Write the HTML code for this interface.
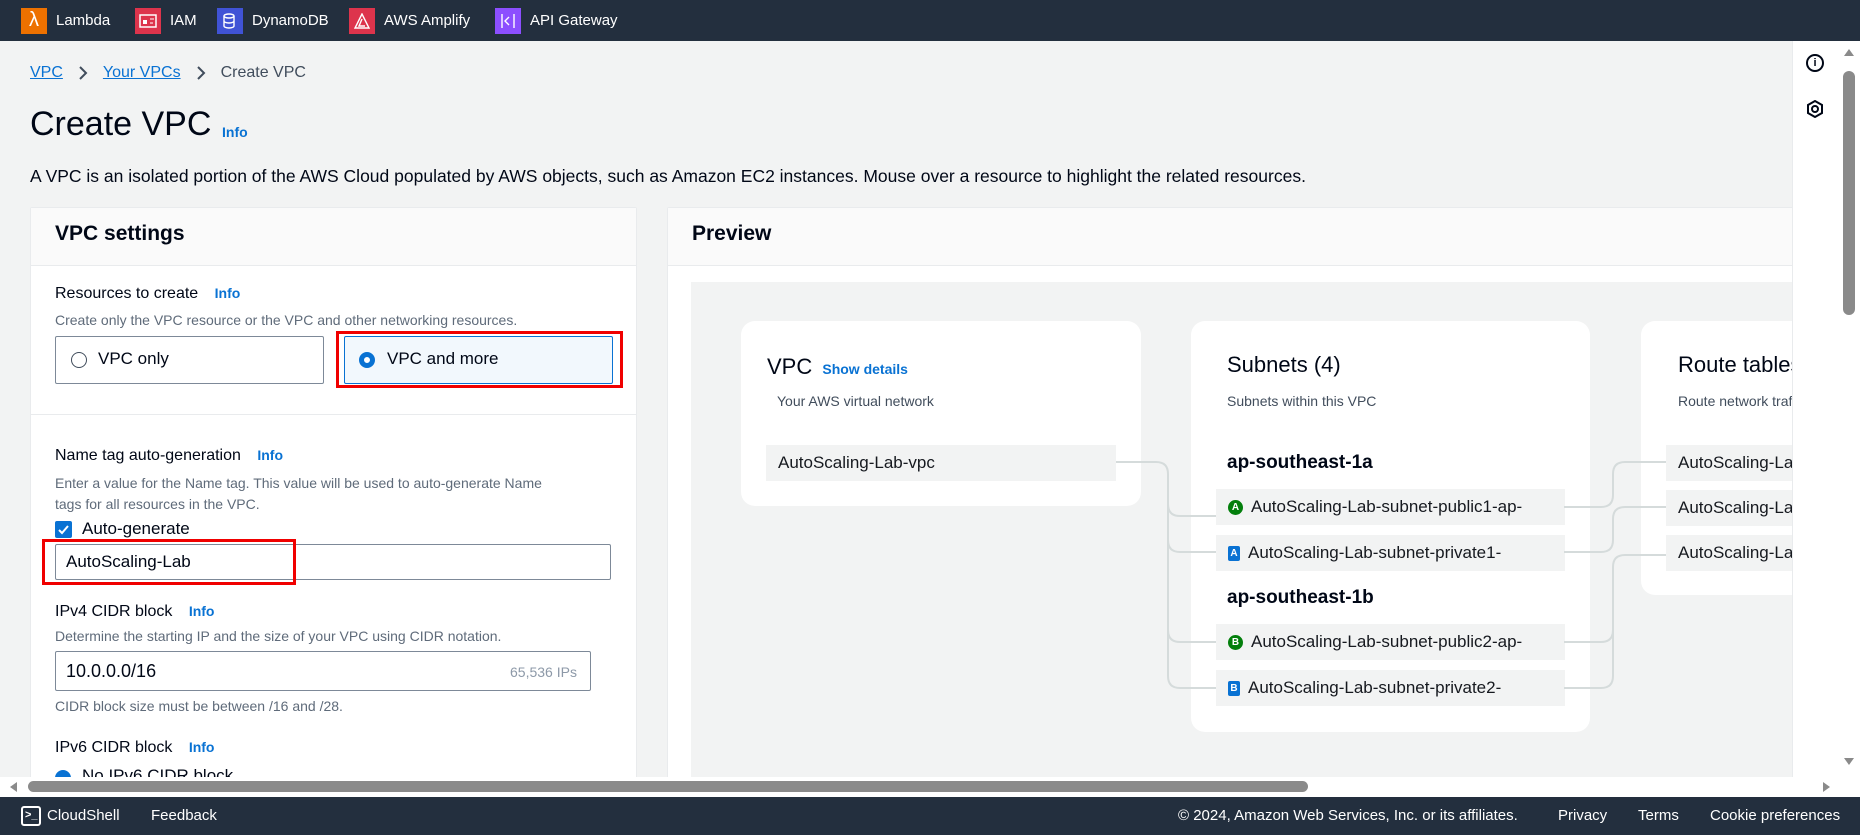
<!DOCTYPE html>
<html><head><meta charset="utf-8">
<style>
*{box-sizing:border-box;margin:0;padding:0}
body{width:1860px;height:835px;overflow:hidden;background:#f2f3f3;font-family:"Liberation Sans",sans-serif;color:#000716;position:relative}
.a{position:absolute;white-space:nowrap}
.top{left:0;top:0;width:1860px;height:41px;background:#232f3e}
.svc{top:0;height:41px;display:flex;align-items:center;color:#fff;font-size:15px}
.ic{width:26px;height:26px;margin-right:9px;display:flex;align-items:center;justify-content:center}
.lnk{color:#0972d3;text-decoration:underline}
.info{color:#0972d3;font-weight:bold;font-size:14px}
.panel{background:#fff;border:1px solid #e9ebed;border-radius:2px}
.lab{font-size:16px;color:#000716}
.desc{font-size:14px;color:#5f6b7a}
.card{background:#fff;border-radius:14px}
.item{background:#f2f3f3;font-size:17px;color:#16191f;display:flex;align-items:center;padding-left:12px}
.badge{width:15px;height:15px;margin-right:8px;color:#fff;font-size:10px;font-weight:bold;display:flex;align-items:center;justify-content:center}
.foot{left:0;top:797px;width:1860px;height:38px;background:#232f3e;color:#fff;font-size:15px}
</style></head><body>
<div class="a top"></div>
<div class="a svc" style="left:21px"><div class="ic" style="background:#ed7100;color:#fff;font-size:20px">λ</div>Lambda</div>
<div class="a svc" style="left:135px"><div class="ic" style="background:#dd344c"><svg width="18" height="14" viewBox="0 0 18 14"><rect x="1" y="1" width="16" height="12" fill="none" stroke="#fff" stroke-width="1.5"/><rect x="4" y="6" width="4" height="4" fill="#fff"/><path d="M11 5h4M11 9h3" stroke="#fff"/></svg></div>IAM</div>
<div class="a svc" style="left:217px"><div class="ic" style="background:#4053d6"><svg width="16" height="18" viewBox="0 0 16 18"><ellipse cx="7" cy="4" rx="5" ry="2" fill="none" stroke="#fff" stroke-width="1.4"/><path d="M2 4v10c0 1.1 2.2 2 5 2s5-.9 5-2V4M2 9c0 1.1 2.2 2 5 2s5-.9 5-2" fill="none" stroke="#fff" stroke-width="1.4"/></svg></div>DynamoDB</div>
<div class="a svc" style="left:349px"><div class="ic" style="background:#dd344c"><svg width="18" height="16" viewBox="0 0 18 16"><path d="M9 1L2 15h14zM9 6l-3 7h6" fill="none" stroke="#fff" stroke-width="1.4"/></svg></div>AWS Amplify</div>
<div class="a svc" style="left:495px"><div class="ic" style="background:#8c4fff"><svg width="18" height="18" viewBox="0 0 18 18"><path d="M3 2v14M15 2v14M10 5l-4 4 4 4" fill="none" stroke="#fff" stroke-width="1.4"/></svg></div>API Gateway</div>

<div class="a" style="left:30px;top:64px;font-size:16px;display:flex;align-items:center"><span class="lnk">VPC</span><svg width="40" height="18" viewBox="0 0 40 18"><path d="M17 3l6 6-6 6" fill="none" stroke="#414d5c" stroke-width="2"/></svg><span class="lnk">Your VPCs</span><svg width="40" height="18" viewBox="0 0 40 18"><path d="M17 3l6 6-6 6" fill="none" stroke="#414d5c" stroke-width="2"/></svg><span style="color:#414d5c">Create VPC</span></div>
<div class="a" style="left:30px;top:105px;font-size:34px;color:#000716">Create VPC</div>
<div class="a info" style="left:222px;top:124px">Info</div>
<div class="a" style="left:30px;top:166px;font-size:17.5px">A VPC is an isolated portion of the AWS Cloud populated by AWS objects, such as Amazon EC2 instances. Mouse over a resource to highlight the related resources.</div>

<!-- left panel -->
<div class="a panel" style="left:30px;top:207px;width:607px;height:600px"></div>
<div class="a" style="left:31px;top:208px;width:605px;height:58px;background:#fafafa;border-bottom:1px solid #e9ebed"></div>
<div class="a" style="left:55px;top:222px;font-size:21px;font-weight:bold">VPC settings</div>
<div class="a lab" style="left:55px;top:285px">Resources to create <span class="info" style="margin-left:12px">Info</span></div>
<div class="a desc" style="left:55px;top:312px">Create only the VPC resource or the VPC and other networking resources.</div>
<div class="a" style="left:55px;top:336px;width:269px;height:48px;border:1px solid #7d8998;border-radius:2px"></div>
<div class="a" style="left:71px;top:352px;width:16px;height:16px;border:1.5px solid #414d5c;border-radius:50%"></div>
<div class="a" style="left:98px;top:349px;font-size:17px">VPC only</div>
<div class="a" style="left:344px;top:336px;width:269px;height:48px;border:1px solid #0972d3;background:#f2f8fd;border-radius:2px"></div>
<div class="a" style="left:359px;top:352px;width:16px;height:16px;border:5px solid #0972d3;border-radius:50%;background:#fff"></div>
<div class="a" style="left:387px;top:349px;font-size:17px">VPC and more</div>
<div class="a" style="left:336px;top:331px;width:287px;height:57px;border:3px solid #f00000"></div>
<div class="a" style="left:31px;top:414px;width:605px;height:1px;background:#e9ebed"></div>
<div class="a lab" style="left:55px;top:447px">Name tag auto-generation <span class="info" style="margin-left:12px">Info</span></div>
<div class="a desc" style="left:55px;top:473px;line-height:21px">Enter a value for the Name tag. This value will be used to auto-generate Name<br>tags for all resources in the VPC.</div>
<div class="a" style="left:55px;top:521px;width:17px;height:17px;background:#0972d3;border-radius:2px"><svg width="17" height="17"><path d="M4 9l3 3 6-7" fill="none" stroke="#fff" stroke-width="2"/></svg></div>
<div class="a lab" style="left:82px;top:519px;font-size:17px">Auto-generate</div>
<div class="a" style="left:55px;top:544px;width:556px;height:36px;border:1px solid #7d8998;border-radius:2px;background:#fff"></div>
<div class="a" style="left:66px;top:552px;font-size:17px">AutoScaling-Lab</div>
<div class="a" style="left:42px;top:539px;width:254px;height:46px;border:3px solid #f00000"></div>
<div class="a lab" style="left:55px;top:603px">IPv4 CIDR block <span class="info" style="margin-left:12px">Info</span></div>
<div class="a desc" style="left:55px;top:628px">Determine the starting IP and the size of your VPC using CIDR notation.</div>
<div class="a" style="left:55px;top:651px;width:536px;height:40px;border:1px solid #7d8998;border-radius:2px;background:#fff"></div>
<div class="a" style="left:66px;top:661px;font-size:18px">10.0.0.0/16</div>
<div class="a desc" style="left:510px;top:664px;color:#8d99a8">65,536 IPs</div>
<div class="a desc" style="left:55px;top:698px">CIDR block size must be between /16 and /28.</div>
<div class="a lab" style="left:55px;top:739px">IPv6 CIDR block <span class="info" style="margin-left:12px">Info</span></div>
<div class="a" style="left:55px;top:770px;width:16px;height:16px;border-radius:50%;background:#0972d3"></div>
<div class="a" style="left:82px;top:766px;font-size:17px">No IPv6 CIDR block</div>

<!-- right panel -->
<div class="a panel" style="left:667px;top:207px;width:1130px;height:600px"></div>
<div class="a" style="left:668px;top:208px;width:1125px;height:58px;background:#fafafa;border-bottom:1px solid #e9ebed"></div>
<div class="a" style="left:692px;top:222px;font-size:21px;font-weight:bold">Preview</div>
<div class="a" style="left:691px;top:282px;width:1110px;height:520px;background:#f2f3f3"></div>

<div class="a card" style="left:741px;top:321px;width:400px;height:185px"></div>
<div class="a" style="left:767px;top:354px;font-size:22px">VPC <span style="color:#0972d3;font-weight:bold;font-size:14px;margin-left:4px">Show details</span></div>
<div class="a" style="left:777px;top:393px;font-size:14px;color:#414d5c">Your AWS virtual network</div>
<div class="a item" style="left:766px;top:445px;width:350px;height:36px">AutoScaling-Lab-vpc</div>

<div class="a card" style="left:1191px;top:321px;width:399px;height:411px"></div>
<div class="a" style="left:1227px;top:352px;font-size:22px">Subnets (4)</div>
<div class="a" style="left:1227px;top:393px;font-size:14px;color:#414d5c">Subnets within this VPC</div>
<div class="a" style="left:1227px;top:452px;font-size:19px;font-weight:bold">ap-southeast-1a</div>
<div class="a item" style="left:1216px;top:489px;width:349px;height:36px"><div class="badge" style="background:#037f0c;border-radius:50%">A</div>AutoScaling-Lab-subnet-public1-ap-</div>
<div class="a item" style="left:1216px;top:535px;width:349px;height:36px"><div class="badge" style="background:#0972d3;border-radius:2px;width:12px">A</div>AutoScaling-Lab-subnet-private1-</div>
<div class="a" style="left:1227px;top:587px;font-size:19px;font-weight:bold">ap-southeast-1b</div>
<div class="a item" style="left:1216px;top:624px;width:349px;height:36px"><div class="badge" style="background:#037f0c;border-radius:50%">B</div>AutoScaling-Lab-subnet-public2-ap-</div>
<div class="a item" style="left:1216px;top:670px;width:349px;height:36px"><div class="badge" style="background:#0972d3;border-radius:2px;width:12px">B</div>AutoScaling-Lab-subnet-private2-</div>

<div class="a card" style="left:1641px;top:321px;width:300px;height:274px"></div>
<div class="a" style="left:1678px;top:352px;font-size:22px">Route tables</div>
<div class="a" style="left:1678px;top:393px;font-size:14px;color:#414d5c">Route network traffic</div>
<div class="a item" style="left:1666px;top:445px;width:300px;height:36px">AutoScaling-Lab-rtb</div>
<div class="a item" style="left:1666px;top:490px;width:300px;height:36px">AutoScaling-Lab-rtb</div>
<div class="a item" style="left:1666px;top:535px;width:300px;height:36px">AutoScaling-Lab-rtb</div>

<svg class="a" style="left:0;top:0" width="1860" height="835">
<g fill="none" stroke="#d5dbdb" stroke-width="2">
<path d="M1116 462h40q12 0 12 12v4M1168 474v30q0 12 12 12h36M1168 474v66q0 12 12 12h36M1168 474v156q0 12 12 12h36M1168 474v202q0 12 12 12h36"/>
<path d="M1564 507h37q12 0 12-12v-21q0-12 12-12h41"/>
<path d="M1564 552h37q12 0 12-12v-21q0-12 12-12h41"/>
<path d="M1564 642h37q12 0 12-12v-63q0-12 12-12h41"/>
<path d="M1564 688h37q12 0 12-12v-109"/>
</g></svg>

<!-- right sidebar -->
<div class="a" style="left:1792px;top:41px;width:46px;height:736px;background:#fff;border-left:1px solid #e9ebed"></div>
<div class="a" style="left:1806px;top:54px;width:18px;height:18px;border:2px solid #000716;border-radius:50%;font-size:11px;font-weight:bold;text-align:center;line-height:14px">i</div>
<svg class="a" style="left:1806px;top:100px" width="18" height="18" viewBox="0 0 18 18"><path d="M9 1l7 4v8l-7 4-7-4V5z" fill="none" stroke="#000716" stroke-width="2"/><circle cx="9" cy="9" r="3" fill="none" stroke="#000716" stroke-width="2"/></svg>
<!-- vertical scrollbar -->
<div class="a" style="left:1838px;top:41px;width:22px;height:756px;background:#fff"></div>
<div class="a" style="left:1843px;top:71px;width:12px;height:244px;background:#8a8a8a;border-radius:6px"></div>
<svg class="a" style="left:1843px;top:47px" width="12" height="10"><path d="M1 9L6 2l5 7z" fill="#8a8a8a"/></svg>
<svg class="a" style="left:1843px;top:757px" width="12" height="10"><path d="M1 1l5 7 5-7z" fill="#8a8a8a"/></svg>
<!-- horizontal scrollbar -->
<div class="a" style="left:0;top:777px;width:1838px;height:20px;background:#fff"></div>
<div class="a" style="left:28px;top:781px;width:1280px;height:11px;background:#8a8a8a;border-radius:6px"></div>
<svg class="a" style="left:8px;top:781px" width="10" height="12"><path d="M9 1L2 6l7 5z" fill="#8a8a8a"/></svg>
<svg class="a" style="left:1822px;top:781px" width="10" height="12"><path d="M1 1l7 5-7 5z" fill="#8a8a8a"/></svg>

<div class="a foot"></div>
<div class="a" style="left:21px;top:806px;width:20px;height:20px;border:2px solid #fff;border-radius:3px;color:#fff;font-size:11px;font-weight:bold;line-height:15px;padding-left:2px">&gt;_</div>
<div class="a" style="left:47px;top:807px;color:#fff;font-size:15px">CloudShell</div>
<div class="a" style="left:151px;top:807px;color:#fff;font-size:15px">Feedback</div>
<div class="a" style="left:1178px;top:807px;color:#fff;font-size:15px">© 2024, Amazon Web Services, Inc. or its affiliates.</div>
<div class="a" style="left:1558px;top:807px;color:#fff;font-size:15px">Privacy</div>
<div class="a" style="left:1638px;top:807px;color:#fff;font-size:15px">Terms</div>
<div class="a" style="left:1710px;top:807px;color:#fff;font-size:15px">Cookie preferences</div>
</body></html>
